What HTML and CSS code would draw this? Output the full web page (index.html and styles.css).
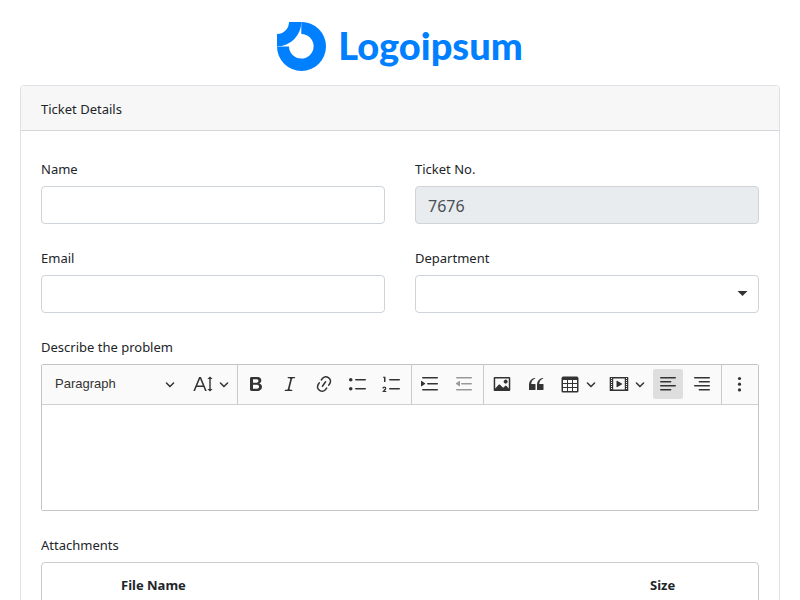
FILE: index.html
```html
<!DOCTYPE html>
<html lang="en">
<head>
<meta charset="utf-8">
<meta name="viewport" content="width=device-width, initial-scale=1">
<title>Ticket Details</title>
<link rel="stylesheet" href="styles.css">
</head>
<body>
<svg class="sprite" aria-hidden="true">
  <symbol id="chevron" viewBox="0 0 10 10"><path d="M.941 4.523a.75.75 0 1 1 1.06-1.06l3.006 3.005 3.005-3.005a.75.75 0 1 1 1.06 1.06l-3.549 3.55a.75.75 0 0 1-1.168-.136L.941 4.523z"/></symbol>
</svg>
<header class="brand">
  <svg class="brand-mark" viewBox="0 0 49 49" aria-hidden="true"><path d="M24.3 0A24.5 24.5 0 1 1 0 24.4H12A12.3 12.3 0 1 0 24.3 12Z"/><path d="M12 0H24.3A24.3 24.3 0 0 1 0 24.3V12A12 12 0 0 0 12 0Z"/></svg>
  <span class="brand-name">Logoipsum</span>
</header>
<main class="card">
  <h1 class="card-title">Ticket Details</h1>
  <form class="card-body">
    <div class="field">
      <label for="name">Name</label>
      <input class="control" id="name" type="text">
    </div>
    <div class="field">
      <label for="ticket">Ticket No.</label>
      <input class="control" id="ticket" type="text" value="7676" readonly>
    </div>
    <div class="field">
      <label for="email">Email</label>
      <input class="control" id="email" type="email">
    </div>
    <div class="field">
      <label for="department">Department</label>
      <div class="select-wrap">
        <select class="control" id="department"><option></option></select>
        <svg class="caret" viewBox="0 0 12 6" aria-hidden="true"><path d="M0 0H12L6 6Z"/></svg>
      </div>
    </div>
    <div class="field wide">
      <label for="problem">Describe the problem</label>
      <div class="editor">
        <div class="toolbar" role="toolbar" aria-label="Editor toolbar">
          <div class="group">
            <div class="heading">
              <select aria-label="Heading"><option>Paragraph</option></select>
              <svg class="chevron" aria-hidden="true"><use href="#chevron"/></svg>
            </div>
            <button type="button" class="tool split" aria-label="Font size"><svg class="icon" viewBox="0 0 20 20"><path d="M9.816 11.5 7.038 4.785 4.261 11.5h5.555Zm.62 1.5H3.641l-1.666 4.028H.312l5.789-14h1.875l5.789 14h-1.663L10.436 13Z"/><path d="M16.3 4.9h-1.9L17 2.4l2.6 2.5h-1.9v10.2h1.9L17 17.6l-2.6-2.5h1.9Z"/></svg><svg class="chevron"><use href="#chevron"/></svg></button>
          </div>
          <div class="group">
            <button type="button" class="tool" aria-label="Bold"><svg class="icon" viewBox="0 0 20 20"><path d="M10.187 17H5.773c-.637 0-1.092-.138-1.364-.415-.273-.277-.409-.718-.409-1.323V4.738c0-.617.14-1.062.419-1.332.279-.27.73-.406 1.354-.406h4.68c.69 0 1.288.041 1.793.124.506.083.96.242 1.36.478.341.197.644.447.906.75a3.262 3.262 0 0 1 .808 2.162c0 1.401-.722 2.426-2.167 3.075C15.05 10.175 16 11.315 16 13.01a3.756 3.756 0 0 1-2.296 3.504 6.1 6.1 0 0 1-1.517.377c-.571.073-1.238.11-2 .11zm-.217-6.217H7v4.087h3.069c1.977 0 2.965-.69 2.965-2.072 0-.707-.256-1.22-.768-1.537-.512-.319-1.277-.478-2.296-.478zM7 5.13v3.619h2.606c.729 0 1.292-.067 1.69-.2a1.6 1.6 0 0 0 .91-.765c.165-.267.247-.566.247-.897 0-.707-.26-1.176-.778-1.409-.519-.232-1.31-.348-2.375-.348H7z"/></svg></button>
            <button type="button" class="tool" aria-label="Italic"><svg class="icon" viewBox="0 0 20 20"><path d="m9.586 14.633.021.004c-.036.335.095.655.393.962.082.083.173.15.274.201h1.474a.6.6 0 1 1 0 1.2H5.304a.6.6 0 0 1 0-1.2h1.15c.474-.07.809-.182 1.005-.334.157-.122.291-.32.404-.597l2.416-9.55a1.053 1.053 0 0 0-.281-.823 1.12 1.12 0 0 0-.442-.296H8.15a.6.6 0 0 1 0-1.2h6.443a.6.6 0 1 1 0 1.2h-1.195c-.376.056-.65.155-.823.296-.215.175-.423.439-.623.79l-2.366 9.347z"/></svg></button>
            <button type="button" class="tool" aria-label="Link"><svg class="icon" viewBox="0 0 20 20"><path d="m11.077 15 .991-1.416a.75.75 0 1 1 1.229.86l-1.148 1.64a.748.748 0 0 1-.217.206 5.251 5.251 0 0 1-8.503-5.955.741.741 0 0 1 .12-.274l1.147-1.639a.75.75 0 1 1 1.228.86L4.933 10.7l.006.003a3.75 3.75 0 0 0 6.132 4.294l.006.004zm5.494-5.335a.748.748 0 0 1-.12.274l-1.147 1.639a.75.75 0 1 1-1.228-.86l.86-1.23a3.75 3.75 0 0 0-6.144-4.301l-.86 1.229a.75.75 0 0 1-1.229-.86l1.148-1.64a.748.748 0 0 1 .217-.206 5.251 5.251 0 0 1 8.503 5.955zm-4.563-2.532a.75.75 0 0 1 .184 1.045l-3.155 4.505a.75.75 0 1 1-1.229-.86l3.155-4.506a.75.75 0 0 1 1.045-.184z"/></svg></button>
            <button type="button" class="tool" aria-label="Bulleted list"><svg class="icon" viewBox="0 0 20 20"><path d="M7 5.75c0 .414.336.75.75.75h9.5a.75.75 0 1 0 0-1.5h-9.5a.75.75 0 0 0-.75.75zm-6 0C1 4.784 1.777 4 2.75 4c.966 0 1.75.777 1.75 1.75 0 .966-.777 1.75-1.75 1.75C1.784 7.5 1 6.723 1 5.75zm6 9c0 .414.336.75.75.75h9.5a.75.75 0 1 0 0-1.5h-9.5a.75.75 0 0 0-.75.75zm-6 0c0-.966.777-1.75 1.75-1.75.966 0 1.75.777 1.75 1.75 0 .966-.777 1.75-1.75 1.75-.966 0-1.75-.777-1.75-1.75z"/></svg></button>
            <button type="button" class="tool" aria-label="Numbered list"><svg class="icon" viewBox="0 0 20 20"><path d="M7 5.75c0 .414.336.75.75.75h9.5a.75.75 0 1 0 0-1.5h-9.5a.75.75 0 0 0-.75.75zM3.5 3v5H2V3.7H1v-1h2.5V3zM.343 17.857l2.59-3.257H2.92a.6.6 0 1 0-1.04 0H.302a2 2 0 1 1 3.995 0h-.001c-.048.405-.16.734-.333.988-.175.254-.59.692-1.244 1.312H4.3v1h-4l.043-.043zM7 14.75a.75.75 0 0 1 .75-.75h9.5a.75.75 0 1 1 0 1.5h-9.5a.75.75 0 0 1-.75-.75z"/></svg></button>
          </div>
          <div class="group">
            <button type="button" class="tool" aria-label="Increase indent"><svg class="icon" viewBox="0 0 20 20"><path d="M2 3.75c0 .414.336.75.75.75h14.5a.75.75 0 1 0 0-1.5H2.75a.75.75 0 0 0-.75.75zm5 6c0 .414.336.75.75.75h9.5a.75.75 0 1 0 0-1.5h-9.5a.75.75 0 0 0-.75.75zM2.75 16.5h14.5a.75.75 0 1 0 0-1.5H2.75a.75.75 0 1 0 0 1.5zM1.632 6.95 5.02 9.358a.4.4 0 0 1-.013.661l-3.39 2.207A.4.4 0 0 1 1 11.892V7.275a.4.4 0 0 1 .632-.326z"/></svg></button>
            <button type="button" class="tool" aria-label="Decrease indent" disabled><svg class="icon" viewBox="0 0 20 20"><path d="M2 3.75c0 .414.336.75.75.75h14.5a.75.75 0 1 0 0-1.5H2.75a.75.75 0 0 0-.75.75zm5 6c0 .414.336.75.75.75h9.5a.75.75 0 1 0 0-1.5h-9.5a.75.75 0 0 0-.75.75zM2.75 16.5h14.5a.75.75 0 1 0 0-1.5H2.75a.75.75 0 1 0 0 1.5zM5.368 6.95 1.98 9.358a.4.4 0 0 0 .013.661l3.39 2.207A.4.4 0 0 0 6 11.892V7.275a.4.4 0 0 0-.632-.326z"/></svg></button>
          </div>
          <div class="group grow">
            <button type="button" class="tool" aria-label="Insert image"><svg class="icon" viewBox="0 0 20 20"><path d="M6.91 10.54c.26-.23.64-.21.88.03l3.36 3.14 2.23-2.06a.64.64 0 0 1 .87 0l2.52 2.97V4.5H3.2v10.12l3.71-4.08zm10.27-7.51c.6 0 1.09.47 1.09 1.05v11.84c0 .59-.49 1.06-1.09 1.06H2.79c-.6 0-1.09-.47-1.09-1.06V4.08c0-.58.49-1.05 1.1-1.05h14.38zm-5.22 5.56a1.96 1.96 0 1 1 3.4-1.96 1.96 1.96 0 0 1-3.4 1.96z"/></svg></button>
            <button type="button" class="tool" aria-label="Block quote"><svg class="icon" viewBox="0 0 20 20"><path d="M3 10.423a6.5 6.5 0 0 1 6.056-6.408l.038.67C6.448 5.423 5.354 7.663 5.22 10H9c.552 0 .5.432.5.986v4.511c0 .554-.448.503-1 .503h-5c-.552 0-.5-.449-.5-1.003v-4.574zm8 0a6.5 6.5 0 0 1 6.056-6.408l.038.67c-2.646.739-3.74 2.979-3.873 5.315H17c.552 0 .5.432.5.986v4.511c0 .554-.448.503-1 .503h-5c-.552 0-.5-.449-.5-1.003v-4.574z"/></svg></button>
            <button type="button" class="tool split" aria-label="Insert table"><svg class="icon" viewBox="0 0 20 20"><path d="M3 6v3h4V6H3zm0 4v3h4v-3H3zm0 4v3h4v-3H3zm5 3h4v-3H8v3zm5 0h4v-3h-4v3zm4-4v-3h-4v3h4zm0-4V6h-4v3h4zm1.5 8a1.5 1.5 0 0 1-1.5 1.5H3A1.5 1.5 0 0 1 1.5 17V4c.222-.863 1.068-1.5 2-1.5h13c.932 0 1.778.637 2 1.5v13zM12 13v-3H8v3h4zm0-4V6H8v3h4z"/></svg><svg class="chevron"><use href="#chevron"/></svg></button>
            <button type="button" class="tool split" aria-label="Insert media"><svg class="icon" viewBox="0 0 20 20"><path d="M18.68 3.03c.6 0 .59-.03.59.55v12.84c0 .59.01.56-.59.56H1.29c-.6 0-.59.03-.59-.56V3.58c0-.58-.01-.55.6-.55h17.38zM15.77 15.5V4.5H4.2v11h11.57zM2 4v1h1V4H2zm0 2v1h1V6H2zm0 2v1h1V8H2zm0 2v1h1v-1H2zm0 2v1h1v-1H2zm0 2v1h1v-1H2zM17 4v1h1V4h-1zm0 2v1h1V6h-1zm0 2v1h1V8h-1zm0 2v1h1v-1h-1zm0 2v1h1v-1h-1zm0 2v1h1v-1h-1zM7.5 7.177a.4.4 0 0 1 .593-.351l5.133 2.824a.4.4 0 0 1 0 .7l-5.133 2.824a.4.4 0 0 1-.593-.35V7.176v.001z"/></svg><svg class="chevron"><use href="#chevron"/></svg></button>
            <button type="button" class="tool active" aria-label="Align left" aria-pressed="true"><svg class="icon" viewBox="0 0 20 20"><path class="line" d="M2.75 3.75h14.5M2.75 7.75h9.9M2.75 11.75h14.5M2.75 15.75h9.9"/></svg></button>
            <button type="button" class="tool" aria-label="Align right"><svg class="icon" viewBox="0 0 20 20"><path class="line" d="M2.75 3.75h14.5M7.35 7.75h9.9M2.75 11.75h14.5M7.35 15.75h9.9"/></svg></button>
          </div>
          <div class="group">
            <button type="button" class="tool" aria-label="Show more items"><svg class="icon" viewBox="0 0 20 20"><circle cx="9.5" cy="4.5" r="1.6"/><circle cx="9.5" cy="10.2" r="1.6"/><circle cx="9.5" cy="15.9" r="1.6"/></svg></button>
          </div>
        </div>
        <textarea class="editable" id="problem"></textarea>
      </div>
    </div>
    <section class="field wide" aria-labelledby="attachments">
      <h2 class="label" id="attachments">Attachments</h2>
      <div class="table-frame">
        <table>
          <thead><tr><th class="pick"></th><th>File Name</th><th class="size">Size</th></tr></thead>
        </table>
      </div>
    </section>
  </form>
</main>
</body>
</html>
```
FILE: styles.css
```css
* { box-sizing: border-box; }

body {
  margin: 0;
  padding: 22px 20px 0;
  background: #fff;
  color: #212529;
  font: 13px/25px "Noto Sans", sans-serif;
}

h1, h2 { margin: 0; font-size: inherit; font-weight: 400; }
.sprite { display: none; }

.brand {
  display: flex;
  justify-content: center;
  align-items: flex-start;
  gap: 12px;
  margin-bottom: 14px;
  color: #007fff;
}
.brand-mark { width: 49px; height: 49px; fill: currentColor; }
.brand-name { font: 900 38px/46px Lato, sans-serif; }

.card { border: 1px solid #dee2e6; border-radius: 4px; }
.card-title {
  padding: 11px 20px 8px;
  background: #f7f7f7;
  border-bottom: 1px solid #d5d8da;
  border-radius: 3px 3px 0 0;
}
.card-body {
  display: grid;
  grid-template-columns: 1fr 1fr;
  gap: 22px 30px;
  padding: 26px 20px;
}
.field { min-width: 0; }
.wide { grid-column: 1 / -1; }
.field > label, .label { display: block; margin-bottom: 4px; }

.control {
  display: block;
  width: 100%;
  height: 38px;
  padding: 8px 12px 6px;
  border: 1px solid #ced4da;
  border-radius: 4px;
  background: #fff;
  color: #495057;
  font: 16px/22px "Noto Sans", sans-serif;
  appearance: none;
}
.control:read-only:not(select) { background: #e9ecef; }

.select-wrap, .heading { position: relative; }
.caret {
  position: absolute;
  right: 11px;
  top: 16px;
  width: 11px;
  height: 5px;
  fill: #333;
  pointer-events: none;
}

.editor { border: 1px solid #c4c4c4; border-radius: 2px; }
.toolbar {
  display: flex;
  min-height: 40px;
  background: #fafafa;
  border-bottom: 1px solid #d0d0d0;
}
.group { display: flex; gap: 4px; padding: 4px; }
.group + .group { border-left: 1px solid #c9c9c9; padding-left: 3px; }
.grow { flex: 1; }

.heading select {
  width: 138px;
  height: 30px;
  padding: 0 9px;
  border: 0;
  background: none;
  color: #333;
  font: 13px/30px "Liberation Sans", Arial, sans-serif;
  appearance: none;
}
.heading .chevron { position: absolute; right: 9px; top: 10px; pointer-events: none; }

.tool {
  display: flex;
  align-items: center;
  width: 30px;
  height: 30px;
  padding: 0 5px;
  border: 0;
  border-radius: 2px;
  background: none;
  color: #333;
}
.split { width: 45px; gap: 6px; }
.tool:disabled { color: #999; }
.active { background: #dedede; }
.icon { flex: none; width: 20px; height: 20px; fill: currentColor; }
.chevron { flex: none; width: 10px; height: 10px; fill: #333; }
.line { stroke: currentColor; stroke-width: 1.5; stroke-linecap: round; }

.editable {
  display: block;
  width: 100%;
  height: 105px;
  padding: 8px;
  border: 0;
  resize: none;
  font: inherit;
}

.table-frame { border: 1px solid #ccc; border-radius: 4px; }
table { width: 100%; border-collapse: collapse; table-layout: fixed; }
th { padding: 10px 0; text-align: left; font-weight: 700; }
.pick { width: 79px; }
.size { width: 108px; }
```
